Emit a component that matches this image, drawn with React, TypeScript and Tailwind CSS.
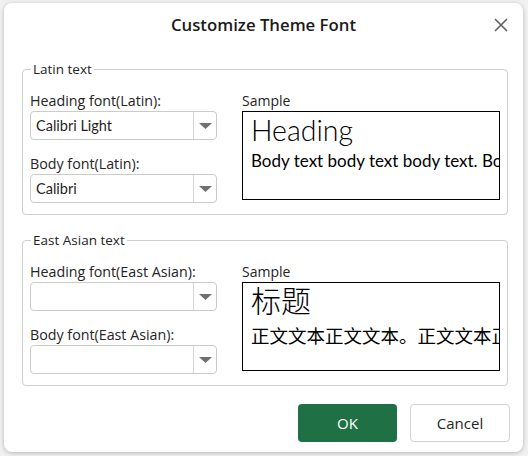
import React from 'react';

const ui = { fontFamily: '"Open Sans", "Noto Sans", sans-serif' };
const calibri = { fontFamily: 'Lato, "Liberation Sans", sans-serif' };
const cjk = { fontFamily: '"Noto Sans CJK SC", "Noto Sans", sans-serif' };

function Combo({ value }: { value?: string }) {
  return (
    <div className="flex h-[29px] w-[187px] items-stretch rounded-[4px] border border-[#cbcbcb] bg-white">
      <div className="flex flex-1 items-center pl-[5px] text-[14.5px] text-[#1f1f1f]" style={calibri}>
        {value}
      </div>
      <div className="flex w-[23px] items-center justify-center border-l border-[#d6d6d6]">
        <svg width="13" height="6" viewBox="0 0 13 6">
          <path d="M0 0 L13 0 L6.5 6 Z" fill="#707070" />
        </svg>
      </div>
    </div>
  );
}

function Group({
  title,
  headingLabel,
  bodyLabel,
  headingValue,
  bodyValue,
  sample,
}: {
  title: string;
  headingLabel: string;
  bodyLabel: string;
  headingValue?: string;
  bodyValue?: string;
  sample: React.ReactNode;
}) {
  return (
    <fieldset className="mx-[18px] rounded-[4px] border border-[#cfcfcf] px-[7px] pb-[11px] pt-[14px]">
      <legend className="ml-[1px] px-[2px] text-[13.5px] leading-[18px] text-[#242424]">{title}</legend>
      <div className="flex gap-[25px]">
        <div className="flex flex-col">
          <div className="h-[19px] text-[14.25px] leading-[18px] text-[#242424]">{headingLabel}</div>
          <Combo value={headingValue} />
          <div className="mt-[15px] h-[19px] text-[14.25px] leading-[18px] text-[#242424]">{bodyLabel}</div>
          <Combo value={bodyValue} />
        </div>
        <div className="flex flex-col">
          <div className="h-[19px] text-[14px] leading-[18px] text-[#242424]">Sample</div>
          <div className="h-[89px] w-[258px] overflow-hidden border border-black bg-white pl-[8px]">{sample}</div>
        </div>
      </div>
    </fieldset>
  );
}

export default function App() {
  return (
    <div className="h-[456px] w-[528px] overflow-hidden bg-[#f1f1f1] pl-[4px] pt-[3px]" style={ui}>
      <div className="flex h-[449px] w-[519px] flex-col rounded-[8px] bg-white shadow-[0_1px_4px_rgba(0,0,0,0.25)]">
        <div className="relative flex h-[57px] items-start justify-center pt-[11px]">
          <div className="text-[16.75px] font-semibold leading-[22px] text-[#1b1b1b]">Customize Theme Font</div>
          <button className="absolute right-[15px] top-[15px] flex h-[14px] w-[14px] items-center justify-center">
            <svg width="14" height="14" viewBox="0 0 14 14">
              <path d="M1 1 L13 13 M13 1 L1 13" stroke="#606060" strokeWidth="1.6" />
            </svg>
          </button>
        </div>

        <Group
          title="Latin text"
          headingLabel="Heading font(Latin):"
          bodyLabel="Body font(Latin):"
          headingValue="Calibri Light"
          bodyValue="Calibri"
          sample={
            <div style={calibri} className="whitespace-nowrap text-black">
              <div className="text-[28.5px] font-light leading-[36px]">Heading</div>
              <div className="mt-[3px] text-[17px] leading-[20px]">Body text body text body text. Body text</div>
            </div>
          }
        />

        <div className="h-[16px]" />

        <Group
          title="East Asian text"
          headingLabel="Heading font(East Asian):"
          bodyLabel="Body font(East Asian):"
          sample={
            <div style={cjk} className="whitespace-nowrap text-black">
              <div className="text-[30px] font-light leading-[33px]">标题</div>
              <div className="mt-[7px] text-[18.5px] leading-[24px]">正文文本正文文本。正文文本正文文本。</div>
            </div>
          }
        />

        <div className="mt-auto flex justify-end gap-[13px] pb-[10px] pr-[13px]">
          <button className="h-[38px] w-[99px] rounded-[4px] bg-[#1f7145] text-[15px] text-white">OK</button>
          <button className="h-[38px] w-[100px] rounded-[4px] border border-[#d1d1d1] bg-white text-[15px] text-[#242424]">
            Cancel
          </button>
        </div>
      </div>
    </div>
  );
}
